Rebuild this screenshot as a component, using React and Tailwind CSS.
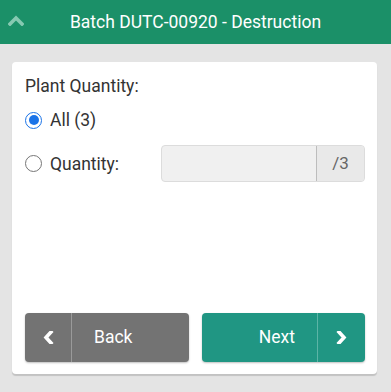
function Radio({ checked }) {
  return checked ? (
    <span className="flex h-[17px] w-[17px] items-center justify-center rounded-full border-[1.5px] border-[#1a73e8] bg-white">
      <span className="h-[10px] w-[10px] rounded-full bg-[#1a73e8]" />
    </span>
  ) : (
    <span className="h-[17px] w-[17px] rounded-full border-[1.5px] border-[#767676] bg-white" />
  );
}

function Chevron({ dir, className }) {
  const pts = {
    up: '2,9 8,3 14,9',
    left: '8,1 3,6.5 8,12',
    right: '3,1 8,6.5 3,12',
  };
  const box = dir === 'up' ? '0 0 16 11' : '0 0 11 13';
  return (
    <svg viewBox={box} className={className} fill="none" stroke="currentColor" strokeWidth="3.6" strokeLinecap="square" strokeLinejoin="miter">
      <polyline points={pts[dir]} />
    </svg>
  );
}

function App() {
  return (
    <div className="flex h-[392px] w-[391px] flex-col bg-[#e4e4e4] font-['Roboto',sans-serif] text-[#333]">
      {/* Header */}
      <div className="relative flex h-[44px] shrink-0 items-center justify-center bg-[#1b9068]">
        <Chevron dir="up" className="absolute left-[8px] top-[15px] h-[11px] w-[16px] text-[#86c9b1]" />
        <h1 className="text-[17.5px] text-white">Batch DUTC-00920 - Destruction</h1>
      </div>

      {/* Card */}
      <div className="ml-[12px] mr-[14px] mt-[18px] flex h-[312px] flex-col rounded-[4px] bg-white pl-[13px] pr-[12px] pt-[13px] shadow-[0_2px_1px_rgba(0,0,0,0.15)]">
        <p className="text-[17.5px] leading-[22px]">Plant Quantity:</p>

        <label className="mt-[10px] flex items-center gap-[8px] text-[17.5px]">
          <Radio checked />
          <span>All (3)</span>
        </label>

        <div className="mt-[12px] flex items-center">
          <label className="flex w-[136px] items-center gap-[8px] text-[17.5px]">
            <Radio />
            <span>Quantity:</span>
          </label>
          <div className="flex h-[37px] flex-1 overflow-hidden rounded-[4px] border border-[#dcdcdc] bg-[#f0f0f0]">
            <input className="min-w-0 flex-1 bg-transparent px-2 outline-none" />
            <span className="flex w-[48px] items-center justify-center border-l border-[#bdbdbd] bg-[#e9e9e9] text-[17px] text-[#666]">/3</span>
          </div>
        </div>

        <div className="mt-auto mb-[12px] flex gap-[13px]">
          <button className="flex h-[49px] flex-1 items-stretch rounded-[4px] bg-[#737373] text-white shadow-[0_1px_2px_rgba(0,0,0,0.25)]">
            <span className="flex w-[47px] items-center justify-center border-r border-[#9a9a9a]">
              <Chevron dir="left" className="h-[13px] w-[11px]" />
            </span>
            <span className="flex items-center pl-[22px] text-[17.5px]">Back</span>
          </button>
          <button className="flex h-[49px] flex-1 items-stretch rounded-[4px] bg-[#209683] text-white shadow-[0_1px_2px_rgba(0,0,0,0.25)]">
            <span className="flex flex-1 items-center justify-end pr-[22px] text-[17.5px]">Next</span>
            <span className="flex w-[48px] items-center justify-center border-l border-[#5cb4a6]">
              <Chevron dir="right" className="h-[13px] w-[11px]" />
            </span>
          </button>
        </div>
      </div>
    </div>
  );
}

export default App;
